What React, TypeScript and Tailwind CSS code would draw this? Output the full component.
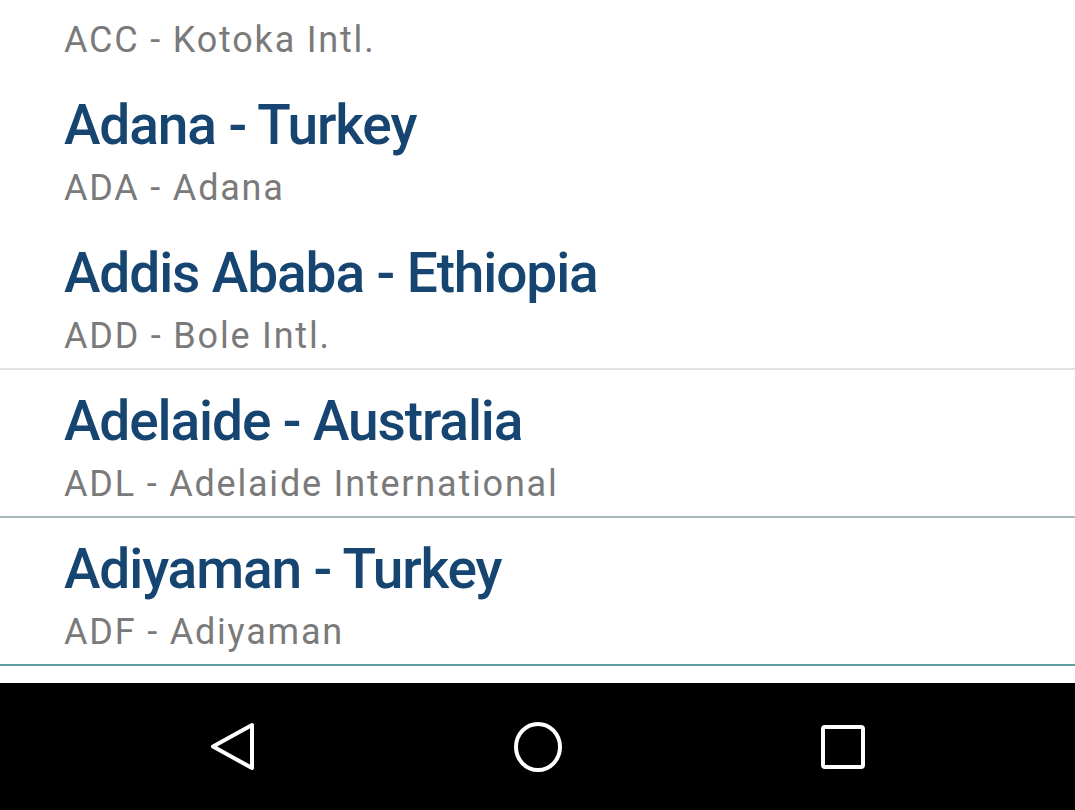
import React from "react";

interface Airport {
  city?: string;
  code: string;
  name: string;
  divider?: string;
}

// first entry is scrolled so that only its airport line is still visible
const airports: Airport[] = [
  { code: "ACC", name: "Kotoka Intl." },
  { city: "Adana - Turkey", code: "ADA", name: "Adana" },
  { city: "Addis Ababa - Ethiopia", code: "ADD", name: "Bole Intl.", divider: "border-[#dfe3e3]" },
  { city: "Adelaide - Australia", code: "ADL", name: "Adelaide International", divider: "border-[#a7b9bd]" },
  { city: "Adiyaman - Turkey", code: "ADF", name: "Adiyaman", divider: "border-[#5f9ea3]" },
];

const AirportRow: React.FC<{ airport: Airport }> = ({ airport }) => (
  <div
    className={`box-border px-[64px] border-b-2 ${
      airport.city ? "h-[148px] pt-[23px]" : "h-[74px] pt-[12px]"
    } ${airport.divider ?? "border-transparent"}`}
  >
    {airport.city && (
      <div className="text-[55px] leading-[56px] font-medium text-[#154570] tracking-[-1.1px] whitespace-nowrap">
        {airport.city}
      </div>
    )}
    <div
      className={`${
        airport.city ? "mt-[7px]" : ""
      } text-[36px] leading-[56px] text-[#7a7a7a] tracking-[1.8px] whitespace-nowrap`}
    >
      {airport.code} - {airport.name}
    </div>
  </div>
);

const NavBar: React.FC = () => (
  <div className="h-[127px] bg-black flex items-center justify-center gap-[258px] pl-[1px]">
    <svg width="46" height="50" viewBox="0 0 46 50" fill="none">
      <path
        d="M42 3 L3 24.5 L42 46 Z"
        stroke="white"
        strokeWidth="4"
        strokeLinejoin="round"
      />
    </svg>
    <svg width="48" height="50" viewBox="0 0 48 50" fill="none">
      <ellipse cx="24" cy="25" rx="22" ry="23" stroke="white" strokeWidth="4" />
    </svg>
    <svg width="46" height="46" viewBox="0 0 46 46" fill="none">
      <rect x="3" y="3" width="40" height="40" rx="2" stroke="white" strokeWidth="4" />
    </svg>
  </div>
);

export default function App() {
  return (
    <div className="w-[1075px] h-[810px] bg-white overflow-hidden font-['Roboto',_'Liberation_Sans',_sans-serif]">
      <div className="h-[683px] overflow-hidden">
        {airports.map((a) => (
          <AirportRow key={a.code} airport={a} />
        ))}
      </div>
      <NavBar />
    </div>
  );
}
